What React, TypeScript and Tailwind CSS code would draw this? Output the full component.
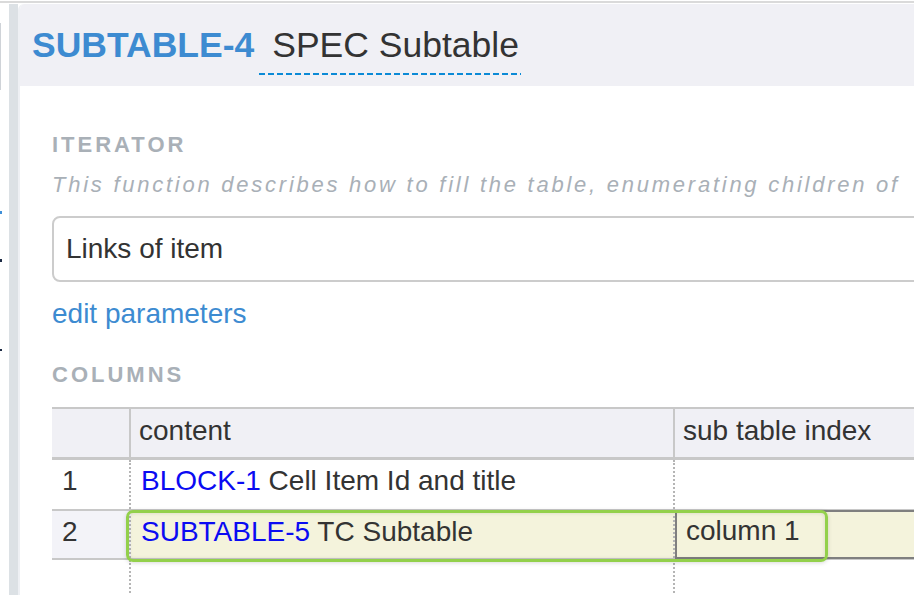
export default function App() {
  const label = "text-[22px] leading-[26px] font-bold tracking-[3px] text-[#a9b0b7]";

  return (
    <div className="w-[914px] h-[595px] overflow-hidden bg-white font-['Liberation_Sans',Arial,sans-serif] text-[#333]">
      {/* top rule */}
      <div className="h-[4px] pt-px">
        <div className="h-[2px] bg-[#dadada]" />
      </div>

      <div className="flex h-[591px]">
        {/* clipped left sidebar */}
        <div className="w-[9px] flex flex-col">
          <div className="mt-[19px] w-px h-[67px] bg-[#cfd3d8]" />
          <div className="mt-[121px] w-[2px] h-[3px] bg-[#3f8fd8]" />
          <div className="mt-[45px] w-[2px] h-[3px] bg-[#1c2a44]" />
          <div className="mt-[87px] w-[2px] h-[2px] bg-[#1c2a44]" />
        </div>
        <div className="w-[9px] bg-[#dce1e5]" />

        {/* main panel */}
        <div className="flex-1 min-w-0 border-l-2 border-[#eef0f4] rounded-tl-md overflow-hidden">
          <div className="h-[82px] bg-[#f0f0f5] pl-[12px] pt-[21px] flex items-start">
            <span className="text-[35.5px] leading-[41px] font-bold text-[#3d8bd1]">SUBTABLE-4</span>
            <div className="ml-[5px]">
              <div className="pl-[13px] pr-[2px] text-[35.5px] leading-[41px] text-[#333] whitespace-nowrap">SPEC Subtable</div>
              <div className="mt-[7px] h-[2px] bg-[repeating-linear-gradient(to_right,#0b8ad6_0_6px,transparent_6px_9px)]" />
            </div>
          </div>

          <div className="pl-[32px]">
            <div className={`mt-[46px] ${label}`}>ITERATOR</div>
            <div className="mt-[14px] text-[22px] leading-[26px] italic tracking-[2.75px] text-[#a9b0b7] whitespace-nowrap">
              This function describes how to fill the table, enumerating children of
            </div>

            <div className="mt-[18px] w-[900px] h-[66px] border-2 border-[#cccccc] rounded-lg flex items-center pl-3 text-[28px] text-[#333]">
              Links of item
            </div>

            <div className="mt-[16px] text-[28px] leading-[32px] text-[#3d8bd1]">edit parameters</div>

            <div className={`mt-[32px] ${label}`}>COLUMNS</div>

            {/* table */}
            <div className="mt-[19px] w-[900px] text-[28px] leading-[32px]">
              <div className="flex h-[53px] bg-[#f0f0f5] border-t-2 border-b-[3px] border-[#c8c8c8]">
                <div className="w-[79px] border-r-2 border-[#c8c8c8]" />
                <div className="w-[544px] border-r-2 border-[#c8c8c8] pl-[8px] pt-[6px]">content</div>
                <div className="flex-1 pl-[8px] pt-[6px] whitespace-nowrap">sub table index</div>
              </div>

              <div className="flex h-[51px] border-b-2 border-[#c8c8c8]">
                <div className="w-[79px] border-r-2 border-dotted border-[#b5b5b5] pl-[10px] pt-[5px]">1</div>
                <div className="w-[544px] border-r-2 border-dotted border-[#b5b5b5] pl-[10px] pt-[5px] whitespace-nowrap">
                  <span className="text-[#0b0bf2]">BLOCK-1</span> Cell Item Id and title
                </div>
                <div className="flex-1" />
              </div>

              <div className="relative flex h-[49px] border-b-2 border-[#c8c8c8]">
                <div className="w-[79px] bg-[#f3f3f8] border-r-2 border-dotted border-[#b5b5b5] pl-[10px] pt-[5px]">2</div>
                <div className="w-[544px] bg-[#f4f3dc] border-r-2 border-dotted border-[#b5b5b5] pl-[10px] pt-[5px] whitespace-nowrap">
                  <span className="text-[#0b0bf2]">SUBTABLE-5</span> TC Subtable
                </div>
                <div className="flex-1 -mt-px h-[49px] bg-[#f4f3dc] border-2 border-[#7f7f7f] pl-[9px] pt-[3px]">column 1</div>
                <div className="absolute left-[74px] top-[-1px] w-[702px] h-[52px] rounded-[7px] border-[3px] border-[#93d04b] shadow-[inset_0_0_4px_rgba(0,0,0,0.12),0_1px_4px_rgba(0,0,0,0.15)]" />
              </div>

              <div className="flex h-[40px]">
                <div className="w-[79px] border-r-2 border-dotted border-[#b5b5b5]" />
                <div className="w-[544px] border-r-2 border-dotted border-[#b5b5b5]" />
                <div className="flex-1" />
              </div>
            </div>
          </div>
        </div>
      </div>
    </div>
  );
}
